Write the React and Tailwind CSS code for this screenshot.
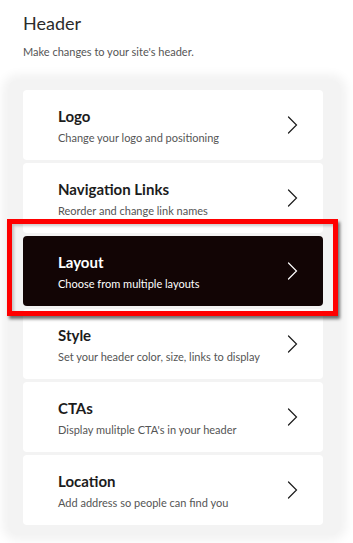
import { Fragment } from "react";

const items = [
    { title: "Logo", text: "Change your logo and positioning" },
    { title: "Navigation Links", text: "Reorder and change link names" },
    { title: "Layout", text: "Choose from multiple layouts", active: true },
    { title: "Style", text: "Set your header color, size, links to display" },
    { title: "CTAs", text: "Display mulitple CTA's in your header" },
    { title: "Location", text: "Add address so people can find you" },
];

function Chevron({ active }) {
    return (
        <svg width="11" height="18" viewBox="0 0 11 18" fill="none">
            <polyline
                points="1.5,1 9.5,9 1.5,17"
                stroke={active ? "#ffffff" : "#1a1a1a"}
                strokeWidth="1.2"
                strokeLinecap="round"
                strokeLinejoin="miter"
            />
        </svg>
    );
}

function Row({ title, text, active }) {
    return (
        <div
            className={`flex items-center justify-between h-[70px] rounded-[4px] pl-[35px] pr-[25px] ${
                active ? "bg-[#120505]" : "bg-white"
            }`}
        >
            <div className="flex flex-col pt-[2px]">
                <p className={`text-[15px] leading-[18px] font-bold ${active ? "text-white" : "text-[#1c1c1c]"}`}>
                    {title}
                </p>
                <p className={`mt-[6px] text-[11px] leading-[14px] ${active ? "text-white" : "text-[#555555]"}`}>
                    {text}
                </p>
            </div>
            <Chevron active={active} />
        </div>
    );
}

export default function App() {
    return (
        <div
            className="relative w-[353px] h-[543px] overflow-hidden bg-white"
            style={{ fontFamily: "Lato, 'Open Sans', sans-serif" }}
        >
            <div className="px-[23px] pt-[12px]">
                <h1 className="text-[18px] leading-[22px] text-[#2b2b2b]">Header</h1>
                <p className="mt-[11px] text-[11px] leading-[14px] text-[#555555]">
                    Make changes to your site's header.
                </p>
            </div>

            <div className="ml-[8px] mr-[12px] mt-[21px] pl-[15px] pr-[18px] py-[10px] bg-[#f3f3f3] rounded-[10px] shadow-[0_0_10px_6px_#f3f3f3]">
                <div className="flex flex-col gap-[3px]">
                    {items.map((item) => (
                        <Fragment key={item.title}>
                            <Row {...item} />
                        </Fragment>
                    ))}
                </div>
            </div>

            {/* red highlight box over the Layout row */}
            <div className="absolute left-[7px] top-[219px] w-[331px] h-[97px] border-[5px] border-[#ff0000] shadow-[inset_2px_2px_3px_rgba(0,0,0,0.2),2px_3px_3px_rgba(0,0,0,0.55)]" />
        </div>
    );
}
